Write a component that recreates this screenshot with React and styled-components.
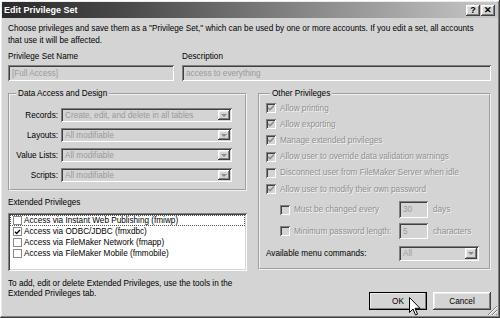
import React from "react";
import styled, { createGlobalStyle } from "styled-components";

const FACE = "#d4d4d4";

const GlobalStyle = createGlobalStyle`
  html, body { margin: 0; padding: 0; background: ${FACE}; }
  body {
    font-family: "Liberation Sans", Arial, sans-serif;
    font-size: 8.2px;
    color: #000;
  }
  * { box-sizing: border-box; }
`;

const sunken = `
  box-shadow: inset 1px 1px 0 #808080, inset -1px -1px 0 #ffffff,
    inset 2px 2px 0 #404040, inset -2px -2px 0 ${FACE};
`;

const raised = `
  box-shadow: inset -1px -1px 0 #404040, inset 1px 1px 0 #ffffff,
    inset -2px -2px 0 #808080, inset 2px 2px 0 #ececec;
`;

const Window = styled.div`
  position: relative;
  width: 500px;
  height: 318px;
  padding: 2px;
  background: ${FACE};
  display: flex;
  flex-direction: column;
  ${raised}
`;

const TitleBar = styled.div`
  height: 16px;
  display: flex;
  align-items: center;
  justify-content: space-between;
  padding: 0 3px 0 2px;
  background: linear-gradient(to right, #2a2a2a, #4a4a4a 25%, #c8c8c8);
`;

const Title = styled.span`
  color: #fff;
  font-weight: bold;
  font-size: 9px;
`;

const Caption = styled.div`
  display: flex;
  gap: 1px;
`;

const CaptionButton = styled.div`
  width: 14px;
  height: 11px;
  background: ${FACE};
  display: flex;
  align-items: center;
  justify-content: center;
  font-weight: bold;
  font-size: 9px;
  line-height: 1;
  ${raised}
`;

const Body = styled.div`
  padding: 5px 7px 0 6px;
`;

const Intro = styled.p`
  margin: 0;
  line-height: 12px;
  white-space: nowrap;
`;

const NameGrid = styled.div`
  display: grid;
  grid-template-columns: 166px 1fr;
  column-gap: 8px;
  margin-top: 4px;
`;

const Label = styled.div`
  line-height: 12px;
  white-space: nowrap;
`;

const TextBox = styled.div`
  margin-top: ${(p) => (p.$flush ? 0 : 2)}px;
  height: ${(p) => p.$h || 16}px;
  padding: 0 4px;
  display: flex;
  align-items: center;
  color: #9a9a9a;
  background: ${FACE};
  white-space: nowrap;
  ${sunken}
`;

const Main = styled.div`
  display: grid;
  grid-template-columns: 239px 233px;
  column-gap: 11px;
  margin-top: 7px;
`;

const Column = styled.div`
  display: flex;
  flex-direction: column;
`;

const Group = styled.fieldset`
  margin: 0;
  padding: ${(p) => p.$pad};
  border: 2px groove #f2f2f2;
  min-width: 0;
`;

const Legend = styled.legend`
  margin-left: 4px;
  padding: 0 2px;
  line-height: 12px;
`;

const FieldGrid = styled.div`
  display: grid;
  grid-template-columns: 46px 171px;
  column-gap: 3px;
  row-gap: 6px;
  align-items: center;
`;

const FieldLabel = styled.div`
  text-align: right;
  white-space: nowrap;
`;

const Select = styled.div`
  height: ${(p) => p.$h || 14}px;
  width: ${(p) => (p.$w ? `${p.$w}px` : "auto")};
  display: flex;
  align-items: center;
  justify-content: space-between;
  padding: 0 2px 0 4px;
  color: #9a9a9a;
  background: ${FACE};
  white-space: nowrap;
  ${sunken}
`;

const DropArrow = styled.div`
  width: 12px;
  height: calc(100% - 4px);
  display: flex;
  align-items: center;
  justify-content: center;
  background: ${FACE};
  ${raised}

  &::after {
    content: "";
    border-left: 3px solid transparent;
    border-right: 3px solid transparent;
    border-top: 3px solid #8a8a8a;
  }
`;

const SectionLabel = styled(Label)`
  margin-top: 6px;
`;

const ListBox = styled.div`
  margin-top: 4px;
  height: 58px;
  padding: 2px 2px;
  background: #fff;
  ${sunken}
`;

const ListItem = styled.div`
  height: 11px;
  display: flex;
  align-items: center;
  gap: 2px;
  padding-left: 3px;
  white-space: nowrap;
  outline: ${(p) => (p.$focus ? "1px dotted #555" : "none")};
  outline-offset: -1px;
`;

const Box = styled.div`
  flex: none;
  width: ${(p) => p.$size}px;
  height: ${(p) => p.$size}px;
  display: flex;
  align-items: center;
  justify-content: center;
  background: ${(p) => (p.$white ? "#fff" : FACE)};
  border: ${(p) => (p.$white ? "1px solid #8a8a8a" : "none")};
  ${(p) => (p.$white ? "" : sunken)}
`;

const Help = styled.p`
  margin: 8px 0 0;
  line-height: 10px;
  white-space: nowrap;
`;

const CheckRow = styled.div`
  height: 16.2px;
  display: flex;
  align-items: center;
  gap: 4px;
  white-space: nowrap;
`;

const Dim = styled.span`
  color: #8e8e8e;
  text-shadow: 0.8px 0.8px 0 #f6f6f6;
`;

const SubGrid = styled.div`
  display: grid;
  grid-template-columns: 128px 29px auto;
  column-gap: 5px;
  align-items: center;
  margin-top: ${(p) => p.$mt}px;
  height: ${(p) => p.$h}px;
  white-space: nowrap;
`;

const SubCheck = styled.div`
  display: flex;
  align-items: center;
  gap: 4px;
  padding-left: 14px;
`;

const ButtonRow = styled.div`
  margin-top: 22px;
  display: flex;
  justify-content: flex-end;
  gap: 6px;
`;

const Button = styled.div`
  width: 58px;
  height: 18px;
  display: flex;
  align-items: center;
  justify-content: center;
  background: ${FACE};
  ${raised}
  ${(p) => (p.$default ? "outline: 1px solid #000; outline-offset: -1px;" : "")}
`;

const Grip = styled.svg`
  position: absolute;
  right: 2px;
  bottom: 2px;
`;

const Cursor = styled.svg`
  position: absolute;
  left: 409px;
  top: 297px;
`;

function Check({ color = "#8a8a8a" }) {
  return (
    <svg width="8" height="8" viewBox="0 0 8 8">
      <path d="M1.2 3.8 L3 5.7 L6.8 1.8" fill="none" stroke={color} strokeWidth="1.5" />
    </svg>
  );
}

function Drop({ value, ...props }) {
  return (
    <Select {...props}>
      <span>{value}</span>
      <DropArrow />
    </Select>
  );
}

const dataRows = [
  ["Records:", "Create, edit, and delete in all tables"],
  ["Layouts:", "All modifiable"],
  ["Value Lists:", "All modifiable"],
  ["Scripts:", "All modifiable"],
];

const extended = [
  ["Access via Instant Web Publishing (fmiwp)", false],
  ["Access via ODBC/JDBC (fmxdbc)", true],
  ["Access via FileMaker Network (fmapp)", false],
  ["Access via FileMaker Mobile (fmmobile)", false],
];

const others = [
  ["Allow printing", true],
  ["Allow exporting", true],
  ["Manage extended privileges", true],
  ["Allow user to override data validation warnings", true],
  ["Disconnect user from FileMaker Server when idle", false],
  ["Allow user to modify their own password", true],
];

export default function App() {
  return (
    <Window>
      <GlobalStyle />
      <TitleBar>
        <Title>Edit Privilege Set</Title>
        <Caption>
          <CaptionButton>?</CaptionButton>
          <CaptionButton>✕</CaptionButton>
        </Caption>
      </TitleBar>
      <Body>
        <Intro>
          Choose privileges and save them as a "Privilege Set," which can be used by one or more
          accounts. If you edit a set, all accounts
          <br />
          that use it will be affected.
        </Intro>
        <NameGrid>
          <Label>Privilege Set Name</Label>
          <Label>Description</Label>
          <TextBox>[Full Access]</TextBox>
          <TextBox>access to everything</TextBox>
        </NameGrid>
        <Main>
          <Column>
            <Group $pad="8px 0 7px 2px">
              <Legend>Data Access and Design</Legend>
              <FieldGrid>
                {dataRows.map(([label, value]) => (
                  <React.Fragment key={label}>
                    <FieldLabel>{label}</FieldLabel>
                    <Drop value={value} />
                  </React.Fragment>
                ))}
              </FieldGrid>
            </Group>
            <SectionLabel>Extended Privileges</SectionLabel>
            <ListBox>
              {extended.map(([text, on], i) => (
                <ListItem key={text} $focus={i === 0}>
                  <Box $size={9} $white>
                    {on && <Check color="#000" />}
                  </Box>
                  {text}
                </ListItem>
              ))}
            </ListBox>
            <Help>
              To add, edit or delete Extended Privileges, use the tools in the
              <br />
              Extended Privileges tab.
            </Help>
          </Column>
          <Column>
            <Group $pad="0 4px 7px 6px">
              <Legend>Other Privileges</Legend>
              {others.map(([text, on]) => (
                <CheckRow key={text}>
                  <Box $size={10}>{on && <Check />}</Box>
                  <Dim>{text}</Dim>
                </CheckRow>
              ))}
              <SubGrid $mt={3} $h={19}>
                <SubCheck>
                  <Box $size={10} />
                  <Dim>Must be changed every</Dim>
                </SubCheck>
                <TextBox $h={17} $flush>30</TextBox>
                <Dim>days</Dim>
              </SubGrid>
              <SubGrid $mt={3} $h={18}>
                <SubCheck>
                  <Box $size={10} />
                  <Dim>Minimum password length:</Dim>
                </SubCheck>
                <TextBox $h={16} $flush>5</TextBox>
                <Dim>characters</Dim>
              </SubGrid>
              <SubGrid $mt={5} $h={16}>
                <span>Available menu commands:</span>
                <Drop value="All" $w={80} $h={15} />
              </SubGrid>
            </Group>
            <ButtonRow>
              <Button $default>OK</Button>
              <Button>Cancel</Button>
            </ButtonRow>
          </Column>
        </Main>
      </Body>
      <Grip width="11" height="11" viewBox="0 0 11 11">
        <path d="M10 1 L1 10 M10 5 L5 10 M10 9 L9 10" stroke="#808080" strokeWidth="1" />
        <path d="M10 2 L2 10 M10 6 L6 10" stroke="#ffffff" strokeWidth="1" />
      </Grip>
      <Cursor width="12" height="19" viewBox="0 0 12 19">
        <path
          d="M0.5 0.5 L0.5 15.5 L4 12 L6.5 18 L8.5 17.2 L6 11.3 L11 11.3 Z"
          fill="#fff"
          stroke="#000"
          strokeWidth="1"
        />
      </Cursor>
    </Window>
  );
}
